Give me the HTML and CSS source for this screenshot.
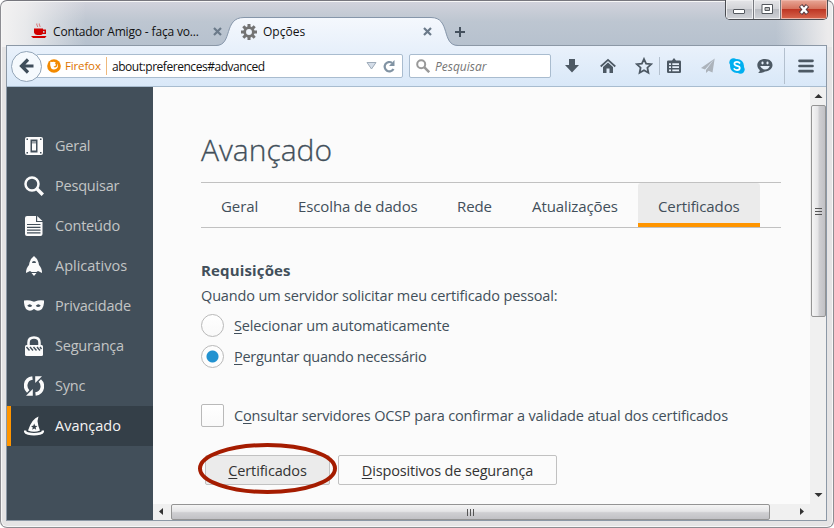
FILE: index.html
```html
<!DOCTYPE html>
<html lang="pt-BR">
<head>
<meta charset="utf-8">
<title>Opções</title>
<link rel="stylesheet" href="styles.css">
</head>
<body>
<div class="window">
  <header class="titlebar">
    <div class="tab tab-idle">
      <svg class="cup" width="16" height="16" viewBox="0 0 16 16"><path d="M3 5.500h9v1h3v4.500h-3.400q-.6 1-2 1H6q-2.500-.5-3-2.500z" fill="#d00000"/><path d="M12 8v1.700h1.500V8z" fill="#c3cbd5"/><path d="M0 13h15.500l-1.500 2H2z" fill="#d00000"/><path d="M6.500 4V3l-.7-1V.5M9 4V3l-.7-1V.5" stroke="#d96a6a" stroke-width=".9" fill="none"/></svg>
      <span class="tab-label label-contador">Contador Amigo - faça vo...</span>
      <svg class="tab-close" width="9" height="9" viewBox="0 0 9 9"><path d="M1 1l7 7M8 1l-7 7" stroke="#6b7a8a" stroke-width="2.200"/></svg>
    </div>
    <div class="tab tab-active">
      <svg class="tab-shape" width="240" height="29" viewBox="0 0 240 29"><defs><linearGradient id="tabFill" x2="0" y2="1"><stop offset="0" stop-color="#f5f8fd"/><stop offset="1" stop-color="#e9f1fb"/></linearGradient></defs><path d="M-8 28.500C9 28.500-1 .5 20 .5H207C227 .5 217 28.500 234 28.500V29H-8z" fill="url(#tabFill)"/><path d="M-8 28.500C9 28.500-1 .5 20 .5H207C227 .5 217 28.500 234 28.500" fill="none" stroke="#8696aa"/></svg>
      <svg class="gear" width="16" height="16" viewBox="-8 -8 16 16"><g fill="none" stroke="#737373"><circle r="4.300" stroke-width="2.700"/><path d="M0-5v-3M0 5v3M5 0h3M-5 0h-3M3.600-3.600l2.100-2.100M3.600 3.600l2.100 2.100M-3.600 3.600l-2.100 2.100M-3.600-3.600l-2.100-2.100" stroke-width="3"/></g></svg>
      <span class="tab-label">Opções</span>
      <svg class="tab-close" width="9" height="9" viewBox="0 0 9 9"><path d="M1 1l7 7M8 1l-7 7" stroke="#6b7a8a" stroke-width="2.200"/></svg>
    </div>
    <svg class="new-tab" width="12" height="12" viewBox="0 0 12 12"><path d="M6 1v10M1 6h10" stroke="#45515e" stroke-width="2"/></svg>
    <div class="controls">
      <span class="ctl ctl-min"><svg width="13" height="11" viewBox="0 0 13 11"><rect x=".5" y="5.500" width="11" height="4" rx=".5" fill="#fff" stroke="#54585e"/></svg></span>
      <span class="ctl ctl-max"><svg width="13" height="11" viewBox="0 0 13 11"><path d="M1 .5h10.500v9H1z" fill="#fff" stroke="#54585e"/><path d="M4 3.500h4.500v3H4z" fill="#bbb" stroke="#54585e"/></svg></span>
      <span class="ctl ctl-close"><svg width="13" height="11" viewBox="0 0 13 11"><path d="M2.500 1.500l7 8M9.500 1.500l-7 8" stroke="#543a40" stroke-width="4.400"/><path d="M3 2l6 7M9 2l-6 7" stroke="#fff" stroke-width="2.500"/></svg></span>
    </div>
  </header>

  <div class="client">
    <nav class="toolbar">
      <div class="back"><svg width="16" height="16" viewBox="0 0 16 16"><path d="M9 1.500L2.500 8 9 14.500M3 8h11.500" fill="none" stroke="#3f4d5a" stroke-width="3.200"/></svg></div>
      <div class="urlbar">
        <svg width="14" height="14" viewBox="0 0 15 15"><circle cx="7.500" cy="7.500" r="7.300" fill="#f38a00"/><path d="M3.500 3l2 .3q2-1 4 .7L8.300 5.300l1.500.7Q9.500 8 7 8q1 2 3 .7 1.500-1.500 1-4 1.800 3.300-.6 5.600-3.400 2.200-6-.3Q2.800 7.500 3.500 3z" fill="#fff"/></svg>
        <span class="brand">Firefox</span>
        <span class="url">about:preferences#advanced</span>
        <svg class="drop" width="11" height="8" viewBox="0 0 11 8"><path d="M1 .5h9L5.500 7z" fill="#d4dde8" stroke="#9eabb9"/></svg>
        <svg width="13" height="13" viewBox="0 0 13 13"><path d="M10.500 9A4.700 4.700 0 1 1 9 2.800" fill="none" stroke="#8193a3" stroke-width="2.200"/><path d="M11.500 0v6H6z" fill="#8193a3"/></svg>
      </div>
      <div class="search">
        <svg width="14" height="14" viewBox="0 0 14 14"><circle cx="5.200" cy="5.200" r="4" fill="none" stroke="#999" stroke-width="2"/><path d="M8.200 8.200l5 5" stroke="#999" stroke-width="2.500"/></svg>
        <span>Pesquisar</span>
      </div>
      <div class="tools">
        <svg width="16" height="16" viewBox="0 0 16 16"><path d="M5 1h6v6h4l-7 7.500L1 7h4z" fill="#4d5964"/></svg>
        <svg width="16" height="16" viewBox="0 0 16 16"><path d="M.7 8.500L8 1.800l7.300 6.700" fill="none" stroke="#4d5964" stroke-width="1.700"/><path d="M3 9l5-4.600L13 9v6H9.500v-4.500h-3V15H3z" fill="#4d5964"/></svg>
        <svg width="18" height="18" viewBox="0 0 18 18"><path d="M9 2l2.100 4.600 5.100.6-3.800 3.500 1 5-4.400-2.500-4.400 2.500 1-5L1.800 7.200l5.100-.6z" fill="none" stroke="#4d5964" stroke-width="1.800"/></svg>
        <i class="divider"></i>
        <svg width="16" height="16" viewBox="0 0 16 16"><path d="M8 0l2 2.500h3.700q1.300 0 1.300 1.300v9.900q0 1.300-1.300 1.300H2.300Q1 15 1 13.700V3.800q0-1.300 1.300-1.300H6z" fill="#4d5964"/><path d="M3 5.200h2v1.800H3zM6.300 5.200H13v1.800H6.300zM3 8.300h2v1.800H3zM6.300 8.300H13v1.800H6.300zM3 11.400h2v1.800H3zM6.300 11.400H13v1.800H6.300z" fill="#e7f0fa"/></svg>
        <svg width="16" height="16" viewBox="0 0 16 16"><path d="M14.700.5L1 10l4 1.500zM14.700.5L6 12v3l2.500-2.300 4 1.800z" fill="#acb3bb"/></svg>
        <svg width="16" height="16" viewBox="0 0 16 16"><circle cx="4.500" cy="4.500" r="4.200" fill="#00aff0"/><circle cx="11.500" cy="11.500" r="4.200" fill="#00aff0"/><circle cx="8" cy="8" r="7" fill="#00aff0"/><path d="M11 5.500Q10 3.800 8 3.800q-2.600 0-2.600 2Q5.400 7.300 8 7.800q2.800.5 2.800 2.300 0 2-2.800 2-2.200 0-3.200-1.700" fill="none" stroke="#fff" stroke-width="1.700"/></svg>
        <svg width="16" height="16" viewBox="0 0 16 16"><path d="M8 1c10 0 10 12 0 12.400Q5 15.500 1 15q2-1 1.700-3C-2 8 .5 1 8 1z" fill="#4d5964"/><ellipse cx="5.500" cy="5" rx="1.100" ry="1.400" fill="#e7f0fa"/><ellipse cx="10.500" cy="5" rx="1.100" ry="1.400" fill="#e7f0fa"/><path d="M3.200 8h9.600q-1.500 3.500-4.800 3.500T3.200 8z" fill="#e7f0fa"/></svg>
        <i class="divider tall"></i>
        <svg width="16" height="14" viewBox="0 0 16 14"><path d="M1.500 1.800h13M1.500 7h13M1.500 12.200h13" stroke="#4d5964" stroke-width="2.700" stroke-linecap="round"/></svg>
      </div>
    </nav>

    <div class="body">
      <aside class="sidebar">
        <div class="item"><svg width="20" height="20" viewBox="0 0 20 20"><rect x="1" y="1" width="18" height="18" rx="2" fill="#fbfbfb"/><path d="M6.500 3.500h7v13h-7z" fill="#424f5a"/><path d="M8 5.500h4v9H8z" fill="#fbfbfb"/><path d="M8 5.500h4v2H8z" fill="#99a0a6"/><path d="M2.500 2.500h1.500V4H2.500zM16 2.500h1.500V4H16zM2.500 16H4v1.500H2.500zM16 16h1.500v1.500H16z" fill="#424f5a"/></svg><span>Geral</span></div>
        <div class="item"><svg width="20" height="20" viewBox="0 0 20 20"><circle cx="8" cy="8" r="6.500" fill="none" stroke="#fbfbfb" stroke-width="2.500"/><path d="M12.800 12.800l6 6" stroke="#fbfbfb" stroke-width="3.400"/></svg><span>Pesquisar</span></div>
        <div class="item"><svg width="20" height="20" viewBox="0 0 20 20"><path d="M3 0h9v6h6.500v12q0 2-2 2H3q-2 0-2-2V2q0-2 2-2z" fill="#fbfbfb"/><path d="M13.200 0l5.300 5h-5.300z" fill="#fbfbfb"/><path d="M3 8.500h13.500M3 11.300h13.500M3 14.100h13.500M3 16.900h13.500" stroke="#424f5a" stroke-width="1.200"/></svg><span>Conteúdo</span></div>
        <div class="item"><svg width="20" height="20" viewBox="0 0 20 20"><path d="M10 0q3 2 4.500 6.500l.5 2.500q3 3 3 8l-4-2-1.500 1h-5L6 15l-4 2q0-5 3-8l.5-2.500Q7 2 10 0zM7.500 17h5L10 20z" fill="#fbfbfb"/><path d="M8 7q0-2 2-2t2 2z" fill="#424f5a"/></svg><span class="loose">Aplicativos</span></div>
        <div class="item"><svg width="20" height="20" viewBox="0 0 20 20"><path d="M0 4.500q3-.5 6 0l4 1.300 4-1.300q3-.5 6 0 .3 5-2 8.500-4 3.500-8 0-4 3.500-8 0Q-.3 9.500 0 4.500z" fill="#fbfbfb"/><path d="M3.200 9.800q2.500-3 5 0-2 2.500-5 0zM11.800 9.800q2.500-3 5 0-3 2.500-5 0z" fill="#424f5a"/></svg><span>Privacidade</span></div>
        <div class="item"><svg width="20" height="20" viewBox="0 0 20 20"><path d="M4.500 10V6.500q0-5 5.500-5t5.500 5V10" fill="none" stroke="#fbfbfb" stroke-width="2.500"/><rect x="1" y="9" width="18" height="11" rx="1.500" fill="#fbfbfb"/><path d="M2.500 11l3 3.500M6 11l3 3.500M9.500 11l3 3.500M13 11l3 3.500M16 11l1.500 2" stroke="#424f5a" stroke-width="1.400"/></svg><span>Segurança</span></div>
        <div class="item"><svg width="20" height="20" viewBox="0 0 20 20"><path d="M8.500 2C.5 3 .2 12 4.200 15.500M11.500 18C19.500 17 19.800 8 15.800 4.500" fill="none" stroke="#fbfbfb" stroke-width="3.600"/><path d="M2 19.800h6.800v-6.800zM18 .2h-6.800v6.800z" fill="#fbfbfb"/></svg><span>Sync</span></div>
        <div class="item current"><svg width="20" height="20" viewBox="0 0 20 20"><path d="M14.500.5Q8 2.500 4 14.500q6 2.500 12 0Q14 10 13.500 5z" fill="#fbfbfb"/><path d="M10.200 7.500l.9 2.200 2.300.2-1.800 1.500.6 2.300-2-1.300-2 1.300.6-2.300L7 9.900l2.300-.2z" fill="#343f48"/><path d="M1 14.500Q1 17 4 17.500q6 1.500 12 0 3-.5 3-3" fill="none" stroke="#fbfbfb" stroke-width="2.400"/></svg><span class="loose">Avançado</span></div>
      </aside>

      <div class="viewport">
        <main class="page">
          <h1>Avançado</h1>
          <div class="pane-tabs">
            <span>Geral</span><span>Escolha de dados</span><span>Rede</span><span>Atualizações</span><span class="selected">Certificados</span>
          </div>
          <h2>Requisições</h2>
          <p class="intro">Quando um servidor solicitar meu certificado pessoal:</p>
          <div class="option"><i class="radio"></i><span><u>S</u>elecionar um automaticamente</span></div>
          <div class="option"><i class="radio checked"></i><span class="tight"><u>P</u>erguntar quando necessário</span></div>
          <div class="option ocsp"><i class="checkbox"></i><span>C<u>o</u>nsultar servidores OCSP para confirmar a validade atual dos certificados</span></div>
          <div class="actions">
            <div class="button pressed"><span><u>C</u>ertificados</span>
              <svg class="ring" width="140" height="52" viewBox="0 0 140 52"><ellipse cx="70.500" cy="26.500" rx="67.500" ry="23.500" fill="none" stroke="#a51c00" stroke-width="4"/></svg>
            </div>
            <div class="button wide"><span><u>D</u>ispositivos de segurança</span></div>
          </div>
        </main>
        <div class="vscroll">
          <svg class="arrow" width="15" height="18" viewBox="0 0 15 18"><path d="M3.500 11L7.500 7l4 4z" fill="#333"/></svg>
          <div class="thumb"><i></i><i></i><i></i></div>
          <svg class="arrow" width="15" height="18" viewBox="0 0 15 18"><path d="M3.500 7L7.500 11l4-4z" fill="#333"/></svg>
        </div>
        <div class="hscroll">
          <svg class="arrow" width="18" height="15" viewBox="0 0 18 15"><path d="M10 4L6 7.500l4 3.500z" fill="#333"/></svg>
          <div class="thumb"><i></i><i></i><i></i></div>
          <svg class="arrow" width="18" height="15" viewBox="0 0 18 15"><path d="M8 4l4 3.500L8 11z" fill="#333"/></svg>
        </div>
        <div class="corner"></div>
      </div>
    </div>
  </div>
</div>
</body>
</html>
```
FILE: styles.css
```css
* { box-sizing: border-box; }
html, body { margin: 0; width: 834px; height: 528px; overflow: hidden; background: #fff; }
body { font-family: "Open Sans", "Noto Sans", sans-serif; font-size: 14.5px; color: #424f5a; }
svg { display: block; flex: none; }
span { white-space: nowrap; }
i { flex: none; }
u { text-decoration-thickness: 1px; text-underline-offset: 2px; }

.window {
  width: 834px; height: 528px; padding: 0 6px 6px 5px;
  border: 1px solid #8d8d92; border-top: 1px solid #77777e; border-radius: 7px;
  background:
    linear-gradient(90deg, #f3f2f2 0, rgba(243,242,242,.8) 25px, rgba(243,242,242,0) 85px, rgba(243,242,242,0) 775px, #ecebec 827px) 0 0 / 100% 46px no-repeat,
    linear-gradient(#d2d3dc, #bdc6d1 45%, #b6c1ce) 0 0 / 100% 46px no-repeat,
    #e5e4e5;
  box-shadow: inset 0 0 0 1px #f7f7f7;
}
.titlebar { height: 44px; display: flex; align-items: flex-end; position: relative; }
.tab { height: 28px; display: flex; align-items: center; font-size: 12px; color: #111; }
.tab-idle { width: 218px; padding-left: 25px; }
.tab-idle .tab-close { margin-right: 2px; }
.tab-label { margin-left: 6px; flex: 1; }
.label-contador { letter-spacing: -.16px; }
.tab-active { width: 240px; height: 29px; margin-bottom: -1px; padding-left: 17px; position: relative; z-index: 1; }
.tab-active > * { position: relative; }
.tab-active .tab-shape { position: absolute; left: 0; top: 0; overflow: visible; }
.tab-active .tab-close { margin-right: 32px; }
.new-tab { margin: 0 0 7px -10px; z-index: 1; }
.controls { position: absolute; right: -1px; top: -1px; height: 20px; display: flex; border: 1px solid #4b4d52; border-top: 0; border-radius: 0 0 5px 5px; overflow: hidden; }
.ctl { display: flex; align-items: center; justify-content: center; background: linear-gradient(#e5e5e8, #d3d4d8 45%, #b9bbc1 48%, #d0d2d7); border-right: 1px solid #77797f; box-shadow: inset 0 0 0 1px #eeeef0; }
.ctl-min { width: 28px; }
.ctl-max { width: 27px; }
.ctl-close { width: 46px; border: 0; background: linear-gradient(#e8a797, #d6745f 45%, #bd3523 48%, #d8674e); box-shadow: inset 0 0 0 1px #eeb5a8; }

.client { height: 476px; border: 1px solid #8c98a6; display: flex; flex-direction: column; background: #fbfbfb; }
.toolbar { height: 41px; flex: none; display: flex; align-items: center; background: linear-gradient(#e9f1fb, #d9e8f8); border-bottom: 1px solid #a8bccf; }
.back { width: 31px; height: 31px; margin-left: 4px; border: 1px solid #93a5b8; border-radius: 50%; background: #f5f9fd; display: flex; align-items: center; justify-content: center; z-index: 1; }
.urlbar { width: 367px; height: 24px; margin-left: -6px; padding: 0 6px 0 10px; border: 1px solid #a9bccf; border-radius: 2px; background: #fff; display: flex; align-items: center; font-size: 12px; color: #111; }
.brand { margin-left: 4px; color: #dc7400; font-size: 11.500px; letter-spacing: -.15px; width: 42px; height: 18px; line-height: 18px; border-right: 1px solid #efb97c; }
.url { margin-left: 5px; flex: 1; letter-spacing: -.46px; }
.drop { margin-right: 6px; }
.search { width: 142px; height: 24px; margin-left: 6px; padding-left: 6px; border: 1px solid #a9bccf; border-radius: 2px; background: #fff; display: flex; align-items: center; gap: 5px; font-size: 12px; font-style: italic; color: #757575; }
.tools { flex: 1; display: grid; grid-template-columns: 36px 35px 24px 7px 34px 29px 28px 28px 13px 16px; align-items: center; margin-left: 13px; }
.tools > :nth-child(9) { margin-left: -1px; }
.divider { width: 1px; height: 18px; background: #b3c0ce; }
.divider.tall { height: 36px; }

.body { flex: 1; display: flex; min-height: 0; }
.sidebar { width: 146px; flex: none; padding-top: 39px; background: #424f5a; color: #c3c5c5; letter-spacing: -.2px; }
.item { height: 40px; display: flex; align-items: center; padding-left: 17px; gap: 11px; }
.item span { margin-top: -2px; }
.item .loose { letter-spacing: 0; }
.item.current { background: #343f48; color: #f4f4f4; border-left: 4px solid #ff9500; padding-left: 13px; }

.viewport { flex: 1; display: grid; grid-template-columns: 1fr 16px; grid-template-rows: 1fr 16px; min-width: 0; }
.page { padding-left: 48px; min-width: 0; overflow: hidden; letter-spacing: -.15px; }
h1 { margin: 37px 0 0; height: 58px; line-height: 51px; font-size: 30px; font-weight: 300; letter-spacing: 0; -webkit-text-stroke: .3px #424f5a; }
.pane-tabs { width: 580px; height: 46px; border: solid #c1c1c1; border-width: 1px 0; display: grid; grid-template-columns: 77px 159px 75px 126px 122px; grid-template-rows: 44px; line-height: 46px; font-size: 15px; letter-spacing: -.1px; }
.pane-tabs span { padding-left: 20px; }
.pane-tabs .selected { background: #ebebeb; box-shadow: inset 0 -4px #ff9500; border-radius: 3px 3px 0 0; }
h2 { margin: 31px 0 0; font-size: 15px; line-height: 23px; height: 24px; font-weight: 700; letter-spacing: .15px; }
.intro { margin: 1px 0 2px; line-height: 24px; white-space: nowrap; }
.option { height: 31px; display: flex; align-items: center; gap: 10px; }
.option .tight { letter-spacing: -.27px; }
.radio, .checkbox { width: 23px; height: 23px; border: 1px solid #b9b9b9; border-radius: 50%; background: linear-gradient(#fff, #f9f9f9); }
.checkbox { border-radius: 2px; }
.checked { background: radial-gradient(circle, #2292d0 5.500px, #fdfdfd 6.500px); }
.ocsp { margin-top: 28px; }
.actions { margin: 24px 0 0 4px; display: flex; gap: 8px; }
.button { width: 125px; height: 30px; border: 1px solid #c1c1c1; border-radius: 2px; background: #fbfbfb; color: #333; display: flex; align-items: center; justify-content: center; position: relative; }
.pressed { background: #ebebeb; }
.wide { width: 219px; }
.ring { position: absolute; left: -9px; top: -14px; z-index: 2; }

.arrow { flex: none; }
.vscroll { background: #f0f0f0; display: flex; flex-direction: column; padding-left: 1px; }
.thumb { border: 1px solid #949494; border-radius: 2px; display: flex; align-items: center; justify-content: center; gap: 2px; }
.thumb i { background: #555; }
.vscroll .thumb { height: 212px; margin-bottom: auto; flex-direction: column; background: linear-gradient(90deg, #f5f5f5, #e5e5e7 45%, #cfcfd2 55%, #c1c1c5); }
.vscroll .thumb i { width: 7px; height: 1px; }
.hscroll { background: #f0f0f0; display: flex; }
.hscroll .thumb { width: 599px; margin-right: auto; background: linear-gradient(#f5f5f5, #e5e5e7 45%, #cfcfd2 55%, #c1c1c5); }
.hscroll .thumb i { width: 1px; height: 7px; }
.corner { background: #f0f0f0; }
```
